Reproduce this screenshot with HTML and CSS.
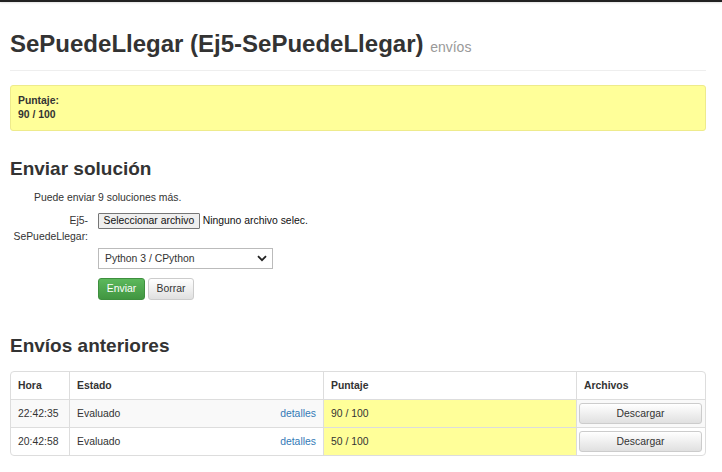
FILE: index.html
```html
<!DOCTYPE html>
<html lang="es">
<head>
<meta charset="utf-8">
<title>SePuedeLlegar</title>
<link rel="stylesheet" href="styles.css">
</head>
<body>
<div class="topbar"></div>
<div class="container">
  <h1 class="page-header">SePuedeLlegar (Ej5-SePuedeLlegar) <small>envíos</small></h1>
  <div class="alert">
    <b>Puntaje:</b><br>
    <b>90 / 100</b>
  </div>

  <h2>Enviar solución</h2>
  <p class="hint">Puede enviar 9 soluciones más.</p>
  <div class="form-row">
    <label class="form-label">Ej5-<br>SePuedeLlegar:</label>
    <div class="form-fields">
      <div class="file-input"><span class="file-btn">Seleccionar archivo</span><span class="file-name">Ninguno archivo selec.</span></div>
      <div class="select">
        <span>Python 3 / CPython</span>
        <svg class="chev" width="10" height="7" viewBox="0 0 10 7"><path d="M1 1.2 L5 5.2 L9 1.2" fill="none" stroke="#222" stroke-width="1.8"/></svg>
      </div>
      <div class="actions">
        <span class="btn btn-success">Enviar</span>
        <span class="btn btn-default">Borrar</span>
      </div>
    </div>
  </div>

  <h2 class="h2-prev">Envíos anteriores</h2>
  <table class="table">
    <colgroup>
      <col class="c-hora"><col class="c-estado"><col class="c-punt"><col class="c-arch">
    </colgroup>
    <thead>
      <tr><th>Hora</th><th>Estado</th><th>Puntaje</th><th>Archivos</th></tr>
    </thead>
    <tbody>
      <tr class="odd">
        <td>22:42:35</td>
        <td><div class="estado"><span>Evaluado</span><a href="#">detalles</a></div></td>
        <td class="score">90 / 100</td>
        <td class="files"><span class="btn btn-default btn-block">Descargar</span></td>
      </tr>
      <tr>
        <td>20:42:58</td>
        <td><div class="estado"><span>Evaluado</span><a href="#">detalles</a></div></td>
        <td class="score">50 / 100</td>
        <td class="files"><span class="btn btn-default btn-block">Descargar</span></td>
      </tr>
    </tbody>
  </table>
</div>
</body>
</html>
```
FILE: styles.css
```css
html, body {
  margin: 0;
  padding: 0;
  background: #fff;
}
body {
  font-family: "Liberation Sans", Arial, sans-serif;
  font-size: 10.4px;
  line-height: 14px;
  color: #333;
}
.topbar {
  height: 2px;
  background: #222;
  box-shadow: 0 1px 2px rgba(0,0,0,0.12);
}
.container {
  padding: 0 16px 0 10px;
}
.page-header {
  font-size: 24px;
  line-height: 26.4px;
  font-weight: bold;
  margin: 28.5px 0 14px;
  padding-bottom: 10.5px;
  border-bottom: 1px solid #eee;
  color: #333;
}
.page-header small {
  font-size: 14px;
  font-weight: normal;
  color: #999;
}
.alert {
  background: #ffff99;
  border: 1px solid #eeeb8c;
  border-radius: 3px;
  padding: 8px 7px;
  line-height: 14px;
}
h2 {
  font-size: 19px;
  line-height: 20.9px;
  font-weight: bold;
  margin: 28px 0 0;
}
.hint {
  margin: 11px 0 0 24px;
  line-height: 14px;
}
.form-row {
  display: grid;
  grid-template-columns: 78px 1fr;
  column-gap: 10px;
  margin-top: 8px;
}
.form-label {
  text-align: right;
  line-height: 16px;
}
.form-fields {
  display: flex;
  flex-direction: column;
  align-items: flex-start;
}
.file-input {
  display: flex;
  align-items: center;
  height: 16px;
}
.file-btn {
  display: inline-block;
  height: 14px;
  line-height: 14px;
  padding: 0 4.5px;
  background: #efefef;
  border: 1px solid #767676;
  border-radius: 1px;
  color: #111;
}
.file-name {
  margin-left: 3px;
  color: #111;
}
.select {
  margin-top: 19px;
  width: 175px;
  height: 21px;
  box-sizing: border-box;
  border: 1px solid #bbb;
  display: flex;
  align-items: center;
  justify-content: space-between;
  padding: 0 5px 0 6px;
  color: #333;
  background: #fff;
}
.chev {
  display: block;
}
.actions {
  display: flex;
  gap: 3px;
  margin-top: 9px;
}
.btn {
  display: inline-flex;
  align-items: center;
  justify-content: center;
  box-sizing: border-box;
  height: 22px;
  padding: 0 9px;
  border-radius: 3px;
  border: 1px solid #ccc;
  font-size: 10.4px;
}
.btn-success {
  color: #fff;
  background: linear-gradient(#5cb85c, #419641);
  border-color: #3e8f3e;
  width: 47px;
}
.btn-default {
  color: #333;
  background: linear-gradient(#fff, #e0e0e0);
  border-color: #ccc;
  width: 46px;
}
.h2-prev {
  margin-top: 36px;
}
.table {
  margin-top: 14px;
  width: 696px;
  border-collapse: separate;
  border-spacing: 0;
  table-layout: fixed;
  border: 1px solid #ddd;
  border-radius: 4px;
}
.c-hora { width: 58px; }
.c-estado { width: 254px; }
.c-punt { width: 253px; }
.table th, .table td {
  text-align: left;
  padding: 0 7px;
  border-left: 1px solid #ddd;
  border-top: 1px solid #ddd;
  height: 28px;
  box-sizing: border-box;
}
.table th:first-child, .table td:first-child {
  border-left: none;
}
.table thead th {
  border-top: none;
  height: 27px;
  font-weight: bold;
}
.table tr.odd td {
  background: #f9f9f9;
}
.table td.score, .table tr.odd td.score {
  background: #ffff99;
}
.estado {
  display: flex;
  justify-content: space-between;
}
.estado a {
  color: #337ab7;
  text-decoration: none;
}
.table td.files {
  padding: 0 3px 0 2px;
}
.btn-block {
  width: 100%;
  height: 21px;
}
```
